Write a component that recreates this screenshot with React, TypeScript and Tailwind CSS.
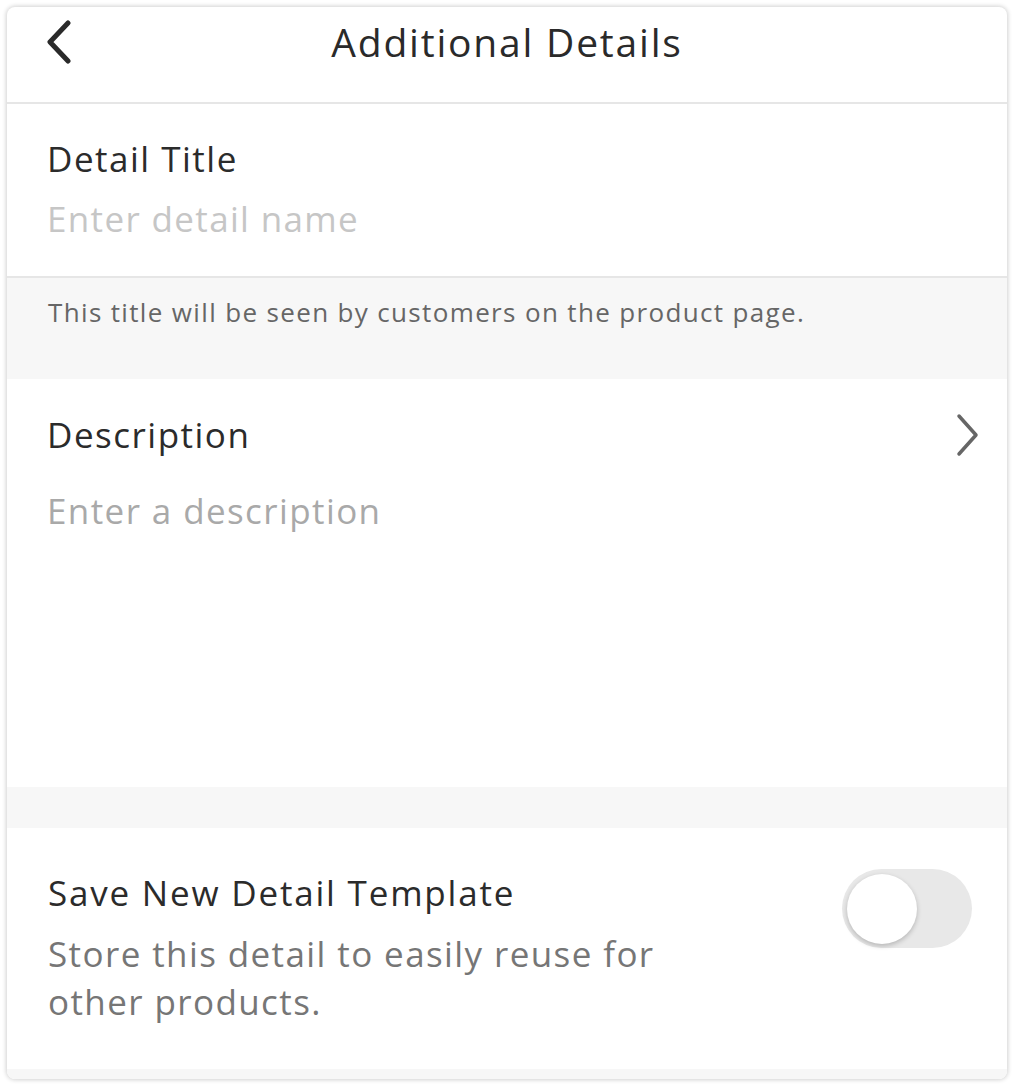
import React from "react";

const font = { fontFamily: '"Open Sans", "Liberation Sans", sans-serif' };

export default function App() {
  return (
    <div className="min-h-[1087px] w-[1015px] bg-white p-[7px] pb-[8px]" style={font}>
      <div className="flex h-[1072px] w-[1000px] flex-col overflow-hidden rounded-[8px] bg-white shadow-[0_0_4px_1px_rgba(0,0,0,0.18)]">
        {/* Header */}
        <div className="relative flex h-[97px] shrink-0 items-center justify-center border-b-2 border-[#e6e6e6]">
          <button className="absolute left-[35px] top-[9px] p-1" aria-label="Back">
            <svg width="28" height="44" viewBox="0 0 28 44" fill="none">
              <path d="M22 3 L4 22 L22 41" stroke="#2a2a2a" strokeWidth="5" strokeLinecap="round" strokeLinejoin="round" />
            </svg>
          </button>
          <h1 className="-mt-[26px] text-[39px] leading-none tracking-[1.8px] text-[#2a2a2a]">Additional Details</h1>
        </div>

        {/* Detail title */}
        <div className="flex h-[174px] shrink-0 flex-col border-b-2 border-[#e6e6e6] px-[40px] pt-[35px]">
          <div className="text-[35px] leading-[40px] tracking-[1.5px] text-[#2b2b2b]">Detail Title</div>
          <div className="mt-[20px] text-[35px] leading-[40px] tracking-[1.35px] text-[#c6c6c6]">Enter detail name</div>
        </div>

        {/* Helper */}
        <div className="h-[101px] shrink-0 bg-[#f7f7f7] px-[41px] pt-[18px]">
          <p className="text-[26px] leading-[32px] tracking-[1.35px] text-[#666666]">
            This title will be seen by customers on the product page.
          </p>
        </div>

        {/* Description */}
        <div className="h-[408px] shrink-0 px-[40px] pt-[34px]">
          <div className="flex items-center justify-between">
            <div className="text-[35px] leading-[42px] tracking-[1.5px] text-[#2b2b2b]">Description</div>
            <svg className="-mr-[14px]" width="26" height="44" viewBox="0 0 26 44" fill="none">
              <path d="M4 3 L21 22 L4 41" stroke="#666666" strokeWidth="3.5" strokeLinecap="round" strokeLinejoin="round" />
            </svg>
          </div>
          <div className="mt-[33px] text-[35px] leading-[42px] tracking-[1.4px] text-[#a9a9a9]">Enter a description</div>
        </div>

        <div className="h-[41px] shrink-0 bg-[#f7f7f7]" />

        {/* Save template */}
        <div className="flex h-[241px] shrink-0 justify-between pl-[41px] pr-[35px] pt-[43px]">
          <div>
            <div className="text-[35px] leading-[44px] tracking-[1.8px] text-[#2b2b2b]">Save New Detail Template</div>
            <p className="mt-[15px] w-[630px] text-[35px] leading-[48px] tracking-[1.4px] text-[#767676]">
              Store this detail to easily reuse for other products.
            </p>
          </div>
          <div className="mt-[-2px] flex h-[79px] w-[130px] shrink-0 items-center rounded-full bg-[#e8e8e8] px-[5px]">
            <div className="h-[70px] w-[70px] rounded-full bg-white shadow-[0_2px_5px_rgba(0,0,0,0.22)]" />
          </div>
        </div>

        <div className="flex-1 bg-[#f7f7f7]" />
      </div>
    </div>
  );
}
